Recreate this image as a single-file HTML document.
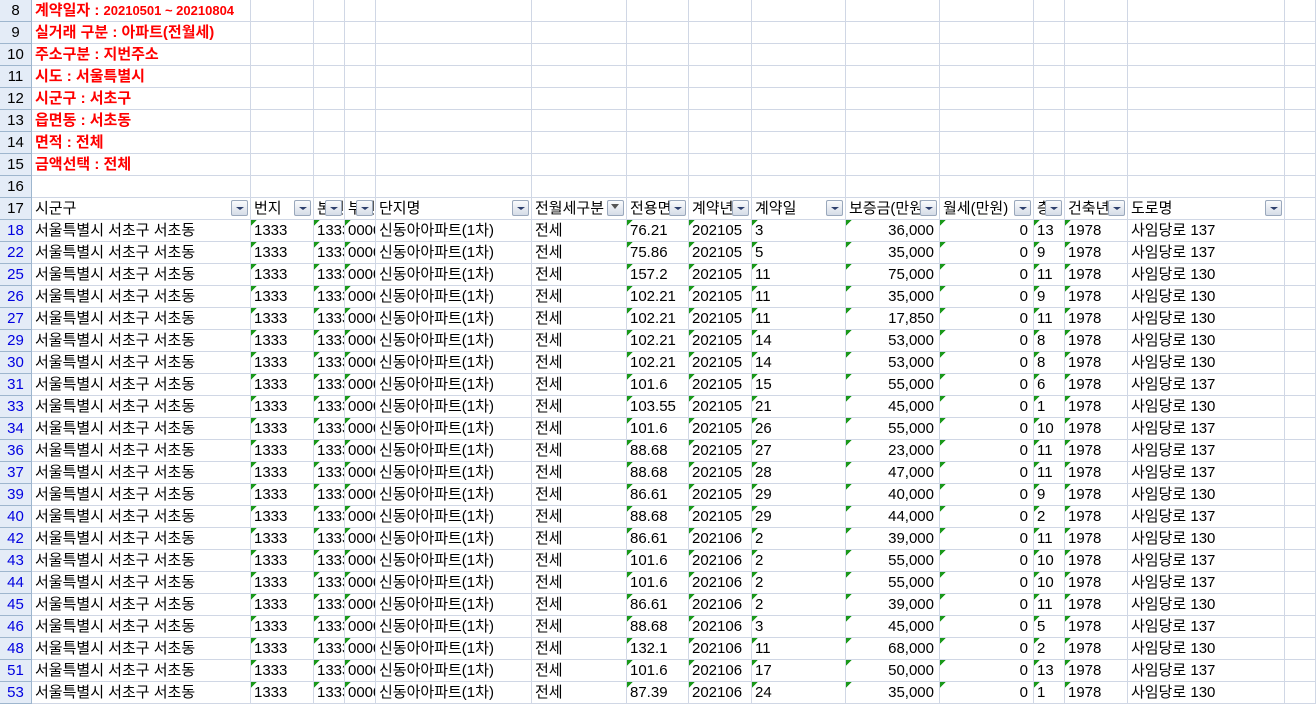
<!DOCTYPE html>
<html><head><meta charset="utf-8"><style>
html,body{margin:0;padding:0;background:#fff;width:1316px;height:704px;overflow:hidden}
.t{font-family:"Liberation Sans","Noto Sans CJK KR",sans-serif;font-size:15px;color:#000}
.row{display:grid;grid-template-columns:32px 219px 63px 31px 31px 156px 95px 62px 63px 94px 94px 94px 31px 63px 157px 31px;height:22px}
.row>div{box-sizing:border-box;border-right:1px solid #d0d7e5;border-bottom:1px solid #d0d7e5;padding-left:3px;white-space:nowrap;overflow:hidden;line-height:22px;position:relative;height:22px}
.row>div.h{background:#e4ecf7;text-align:center;padding:0;border-color:#9eb6ce;color:#000}
.row>div.b{color:#0000e0}
.row>div.r{text-align:right;padding-right:5px}
.row>div.g{background:linear-gradient(135deg,#1a991a 0 4px,transparent 4px) no-repeat;background-size:6px 6px}
.row>div.red{color:#f00;font-weight:bold;overflow:visible}
.red small{font-size:13px}
.btn{position:absolute;right:2px;top:2px;width:17px;height:16px;border:1px solid #9aa8bc;border-radius:2px;background:linear-gradient(#fafbfd,#d5dce7);box-sizing:border-box}
.btn:after{content:"";position:absolute;left:4px;top:6px;border-left:4px solid transparent;border-right:4px solid transparent;border-top:3px solid #2c3e6c}
.flt:after{left:3px;top:3px;border-left:4px solid transparent;border-right:4px solid transparent;border-top:5px solid #555;}
</style></head><body><div class="t">
<div class="row"><div class="h">8</div><div class="red">계약일자 : <small>20210501 ~ 20210804</small></div><div></div><div></div><div></div><div></div><div></div><div></div><div></div><div></div><div></div><div></div><div></div><div></div><div></div><div></div></div>
<div class="row"><div class="h">9</div><div class="red">실거래 구분 : 아파트(전월세)</div><div></div><div></div><div></div><div></div><div></div><div></div><div></div><div></div><div></div><div></div><div></div><div></div><div></div><div></div></div>
<div class="row"><div class="h">10</div><div class="red">주소구분 : 지번주소</div><div></div><div></div><div></div><div></div><div></div><div></div><div></div><div></div><div></div><div></div><div></div><div></div><div></div><div></div></div>
<div class="row"><div class="h">11</div><div class="red">시도 : 서울특별시</div><div></div><div></div><div></div><div></div><div></div><div></div><div></div><div></div><div></div><div></div><div></div><div></div><div></div><div></div></div>
<div class="row"><div class="h">12</div><div class="red">시군구 : 서초구</div><div></div><div></div><div></div><div></div><div></div><div></div><div></div><div></div><div></div><div></div><div></div><div></div><div></div><div></div></div>
<div class="row"><div class="h">13</div><div class="red">읍면동 : 서초동</div><div></div><div></div><div></div><div></div><div></div><div></div><div></div><div></div><div></div><div></div><div></div><div></div><div></div><div></div></div>
<div class="row"><div class="h">14</div><div class="red">면적 : 전체</div><div></div><div></div><div></div><div></div><div></div><div></div><div></div><div></div><div></div><div></div><div></div><div></div><div></div><div></div></div>
<div class="row"><div class="h">15</div><div class="red">금액선택 : 전체</div><div></div><div></div><div></div><div></div><div></div><div></div><div></div><div></div><div></div><div></div><div></div><div></div><div></div><div></div></div>
<div class="row"><div class="h">16</div><div></div><div></div><div></div><div></div><div></div><div></div><div></div><div></div><div></div><div></div><div></div><div></div><div></div><div></div><div></div></div>
<div class="row"><div class="h">17</div><div>시군구<span class="btn"></span></div><div>번지<span class="btn"></span></div><div>본번<span class="btn"></span></div><div>부번<span class="btn"></span></div><div>단지명<span class="btn"></span></div><div>전월세구분<span class="btn flt"></span></div><div>전용면적<span class="btn"></span></div><div>계약년월<span class="btn"></span></div><div>계약일<span class="btn"></span></div><div>보증금(만원)<span class="btn"></span></div><div>월세(만원)<span class="btn"></span></div><div>층<span class="btn"></span></div><div>건축년도<span class="btn"></span></div><div>도로명<span class="btn"></span></div><div></div></div>
<div class="row"><div class="h b">18</div><div>서울특별시 서초구 서초동</div><div class="g">1333</div><div class="g">1333</div><div class="g">0000</div><div>신동아아파트(1차)</div><div>전세</div><div class="g">76.21</div><div class="g">202105</div><div class="g">3</div><div class="g r">36,000</div><div class="g r">0</div><div class="g">13</div><div class="g">1978</div><div>사임당로 137</div><div></div></div>
<div class="row"><div class="h b">22</div><div>서울특별시 서초구 서초동</div><div class="g">1333</div><div class="g">1333</div><div class="g">0000</div><div>신동아아파트(1차)</div><div>전세</div><div class="g">75.86</div><div class="g">202105</div><div class="g">5</div><div class="g r">35,000</div><div class="g r">0</div><div class="g">9</div><div class="g">1978</div><div>사임당로 137</div><div></div></div>
<div class="row"><div class="h b">25</div><div>서울특별시 서초구 서초동</div><div class="g">1333</div><div class="g">1333</div><div class="g">0000</div><div>신동아아파트(1차)</div><div>전세</div><div class="g">157.2</div><div class="g">202105</div><div class="g">11</div><div class="g r">75,000</div><div class="g r">0</div><div class="g">11</div><div class="g">1978</div><div>사임당로 130</div><div></div></div>
<div class="row"><div class="h b">26</div><div>서울특별시 서초구 서초동</div><div class="g">1333</div><div class="g">1333</div><div class="g">0000</div><div>신동아아파트(1차)</div><div>전세</div><div class="g">102.21</div><div class="g">202105</div><div class="g">11</div><div class="g r">35,000</div><div class="g r">0</div><div class="g">9</div><div class="g">1978</div><div>사임당로 130</div><div></div></div>
<div class="row"><div class="h b">27</div><div>서울특별시 서초구 서초동</div><div class="g">1333</div><div class="g">1333</div><div class="g">0000</div><div>신동아아파트(1차)</div><div>전세</div><div class="g">102.21</div><div class="g">202105</div><div class="g">11</div><div class="g r">17,850</div><div class="g r">0</div><div class="g">11</div><div class="g">1978</div><div>사임당로 130</div><div></div></div>
<div class="row"><div class="h b">29</div><div>서울특별시 서초구 서초동</div><div class="g">1333</div><div class="g">1333</div><div class="g">0000</div><div>신동아아파트(1차)</div><div>전세</div><div class="g">102.21</div><div class="g">202105</div><div class="g">14</div><div class="g r">53,000</div><div class="g r">0</div><div class="g">8</div><div class="g">1978</div><div>사임당로 130</div><div></div></div>
<div class="row"><div class="h b">30</div><div>서울특별시 서초구 서초동</div><div class="g">1333</div><div class="g">1333</div><div class="g">0000</div><div>신동아아파트(1차)</div><div>전세</div><div class="g">102.21</div><div class="g">202105</div><div class="g">14</div><div class="g r">53,000</div><div class="g r">0</div><div class="g">8</div><div class="g">1978</div><div>사임당로 130</div><div></div></div>
<div class="row"><div class="h b">31</div><div>서울특별시 서초구 서초동</div><div class="g">1333</div><div class="g">1333</div><div class="g">0000</div><div>신동아아파트(1차)</div><div>전세</div><div class="g">101.6</div><div class="g">202105</div><div class="g">15</div><div class="g r">55,000</div><div class="g r">0</div><div class="g">6</div><div class="g">1978</div><div>사임당로 137</div><div></div></div>
<div class="row"><div class="h b">33</div><div>서울특별시 서초구 서초동</div><div class="g">1333</div><div class="g">1333</div><div class="g">0000</div><div>신동아아파트(1차)</div><div>전세</div><div class="g">103.55</div><div class="g">202105</div><div class="g">21</div><div class="g r">45,000</div><div class="g r">0</div><div class="g">1</div><div class="g">1978</div><div>사임당로 130</div><div></div></div>
<div class="row"><div class="h b">34</div><div>서울특별시 서초구 서초동</div><div class="g">1333</div><div class="g">1333</div><div class="g">0000</div><div>신동아아파트(1차)</div><div>전세</div><div class="g">101.6</div><div class="g">202105</div><div class="g">26</div><div class="g r">55,000</div><div class="g r">0</div><div class="g">10</div><div class="g">1978</div><div>사임당로 137</div><div></div></div>
<div class="row"><div class="h b">36</div><div>서울특별시 서초구 서초동</div><div class="g">1333</div><div class="g">1333</div><div class="g">0000</div><div>신동아아파트(1차)</div><div>전세</div><div class="g">88.68</div><div class="g">202105</div><div class="g">27</div><div class="g r">23,000</div><div class="g r">0</div><div class="g">11</div><div class="g">1978</div><div>사임당로 137</div><div></div></div>
<div class="row"><div class="h b">37</div><div>서울특별시 서초구 서초동</div><div class="g">1333</div><div class="g">1333</div><div class="g">0000</div><div>신동아아파트(1차)</div><div>전세</div><div class="g">88.68</div><div class="g">202105</div><div class="g">28</div><div class="g r">47,000</div><div class="g r">0</div><div class="g">11</div><div class="g">1978</div><div>사임당로 137</div><div></div></div>
<div class="row"><div class="h b">39</div><div>서울특별시 서초구 서초동</div><div class="g">1333</div><div class="g">1333</div><div class="g">0000</div><div>신동아아파트(1차)</div><div>전세</div><div class="g">86.61</div><div class="g">202105</div><div class="g">29</div><div class="g r">40,000</div><div class="g r">0</div><div class="g">9</div><div class="g">1978</div><div>사임당로 130</div><div></div></div>
<div class="row"><div class="h b">40</div><div>서울특별시 서초구 서초동</div><div class="g">1333</div><div class="g">1333</div><div class="g">0000</div><div>신동아아파트(1차)</div><div>전세</div><div class="g">88.68</div><div class="g">202105</div><div class="g">29</div><div class="g r">44,000</div><div class="g r">0</div><div class="g">2</div><div class="g">1978</div><div>사임당로 137</div><div></div></div>
<div class="row"><div class="h b">42</div><div>서울특별시 서초구 서초동</div><div class="g">1333</div><div class="g">1333</div><div class="g">0000</div><div>신동아아파트(1차)</div><div>전세</div><div class="g">86.61</div><div class="g">202106</div><div class="g">2</div><div class="g r">39,000</div><div class="g r">0</div><div class="g">11</div><div class="g">1978</div><div>사임당로 130</div><div></div></div>
<div class="row"><div class="h b">43</div><div>서울특별시 서초구 서초동</div><div class="g">1333</div><div class="g">1333</div><div class="g">0000</div><div>신동아아파트(1차)</div><div>전세</div><div class="g">101.6</div><div class="g">202106</div><div class="g">2</div><div class="g r">55,000</div><div class="g r">0</div><div class="g">10</div><div class="g">1978</div><div>사임당로 137</div><div></div></div>
<div class="row"><div class="h b">44</div><div>서울특별시 서초구 서초동</div><div class="g">1333</div><div class="g">1333</div><div class="g">0000</div><div>신동아아파트(1차)</div><div>전세</div><div class="g">101.6</div><div class="g">202106</div><div class="g">2</div><div class="g r">55,000</div><div class="g r">0</div><div class="g">10</div><div class="g">1978</div><div>사임당로 137</div><div></div></div>
<div class="row"><div class="h b">45</div><div>서울특별시 서초구 서초동</div><div class="g">1333</div><div class="g">1333</div><div class="g">0000</div><div>신동아아파트(1차)</div><div>전세</div><div class="g">86.61</div><div class="g">202106</div><div class="g">2</div><div class="g r">39,000</div><div class="g r">0</div><div class="g">11</div><div class="g">1978</div><div>사임당로 130</div><div></div></div>
<div class="row"><div class="h b">46</div><div>서울특별시 서초구 서초동</div><div class="g">1333</div><div class="g">1333</div><div class="g">0000</div><div>신동아아파트(1차)</div><div>전세</div><div class="g">88.68</div><div class="g">202106</div><div class="g">3</div><div class="g r">45,000</div><div class="g r">0</div><div class="g">5</div><div class="g">1978</div><div>사임당로 137</div><div></div></div>
<div class="row"><div class="h b">48</div><div>서울특별시 서초구 서초동</div><div class="g">1333</div><div class="g">1333</div><div class="g">0000</div><div>신동아아파트(1차)</div><div>전세</div><div class="g">132.1</div><div class="g">202106</div><div class="g">11</div><div class="g r">68,000</div><div class="g r">0</div><div class="g">2</div><div class="g">1978</div><div>사임당로 130</div><div></div></div>
<div class="row"><div class="h b">51</div><div>서울특별시 서초구 서초동</div><div class="g">1333</div><div class="g">1333</div><div class="g">0000</div><div>신동아아파트(1차)</div><div>전세</div><div class="g">101.6</div><div class="g">202106</div><div class="g">17</div><div class="g r">50,000</div><div class="g r">0</div><div class="g">13</div><div class="g">1978</div><div>사임당로 137</div><div></div></div>
<div class="row"><div class="h b">53</div><div>서울특별시 서초구 서초동</div><div class="g">1333</div><div class="g">1333</div><div class="g">0000</div><div>신동아아파트(1차)</div><div>전세</div><div class="g">87.39</div><div class="g">202106</div><div class="g">24</div><div class="g r">35,000</div><div class="g r">0</div><div class="g">1</div><div class="g">1978</div><div>사임당로 130</div><div></div></div>
</div></body></html>
